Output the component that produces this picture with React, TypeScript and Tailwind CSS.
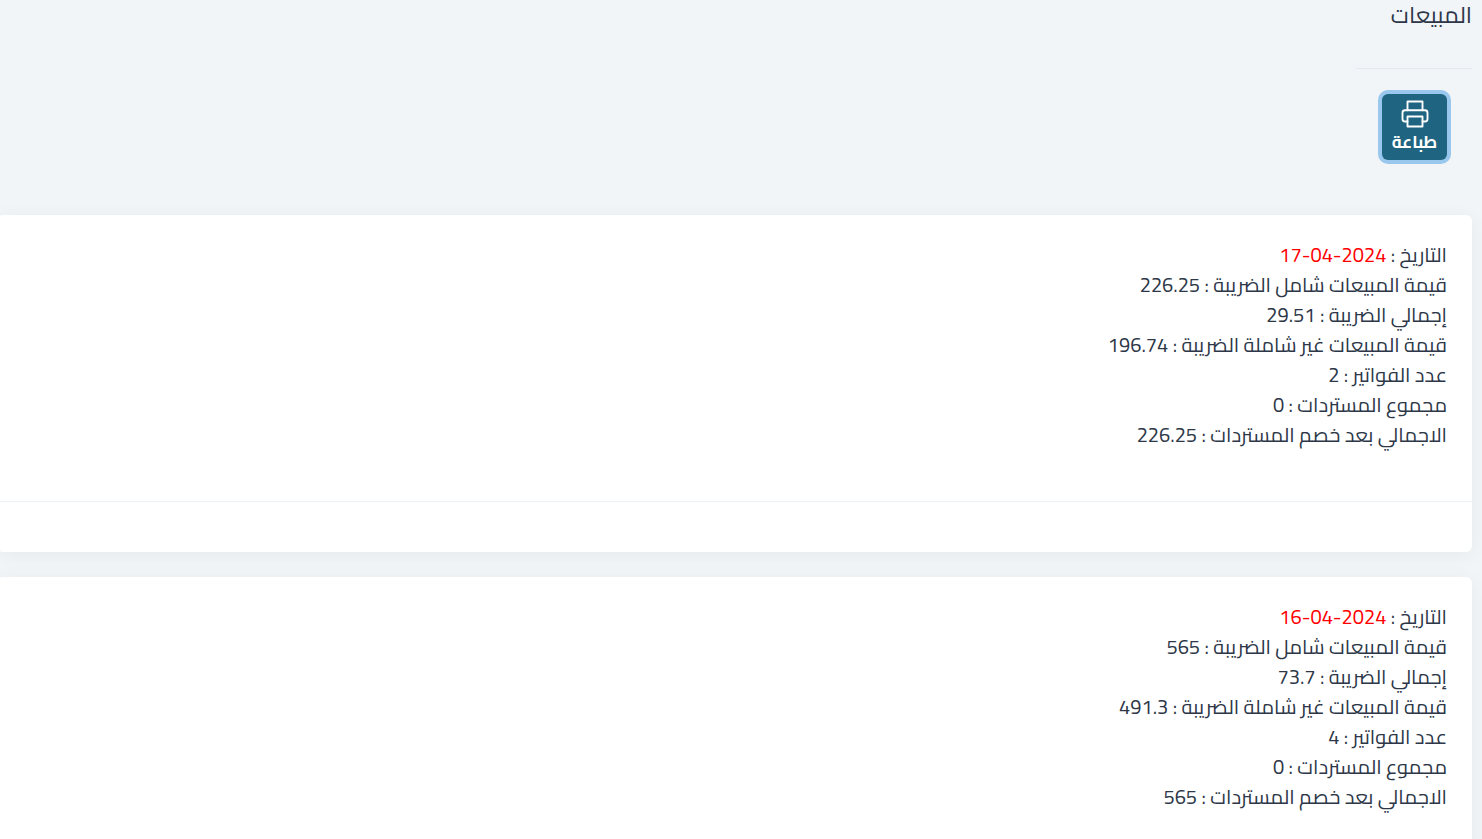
type Report = {
  date: string
  rows: { label: string; value: string }[]
}

const REPORTS: Report[] = [
  {
    date: '17-04-2024',
    rows: [
      { label: 'قيمة المبيعات شامل الضريبة', value: '226.25' },
      { label: 'إجمالي الضريبة', value: '29.51' },
      { label: 'قيمة المبيعات غير شاملة الضريبة', value: '196.74' },
      { label: 'عدد الفواتير', value: '2' },
      { label: 'مجموع المستردات', value: '0' },
      { label: 'الاجمالي بعد خصم المستردات', value: '226.25' },
    ],
  },
  {
    date: '16-04-2024',
    rows: [
      { label: 'قيمة المبيعات شامل الضريبة', value: '565' },
      { label: 'إجمالي الضريبة', value: '73.7' },
      { label: 'قيمة المبيعات غير شاملة الضريبة', value: '491.3' },
      { label: 'عدد الفواتير', value: '4' },
      { label: 'مجموع المستردات', value: '0' },
      { label: 'الاجمالي بعد خصم المستردات', value: '565' },
    ],
  },
]

function PrinterIcon() {
  return (
    <svg
      aria-hidden
      viewBox="0 0 24 24"
      className="size-[30px]"
      fill="none"
      stroke="currentColor"
      strokeWidth="1.5"
      strokeLinecap="round"
      strokeLinejoin="round"
    >
      <polyline points="6 9 6 2 18 2 18 9" />
      <path d="M6 18H4a2 2 0 0 1-2-2v-5a2 2 0 0 1 2-2h16a2 2 0 0 1 2 2v5a2 2 0 0 1-2 2h-2" />
      <rect x="6" y="14" width="12" height="8" />
    </svg>
  )
}

function ReportCard({ date, rows }: Report) {
  return (
    <section className="rounded-l-xs rounded-r-md bg-white shadow-[0_3px_20px_#0000000d]">
      <div className="border-b border-[#edf2f7] px-[25px] pt-[25px] pb-[51px] text-[20px] leading-[30px]">
        <p>
          التاريخ :{' '}
          <bdi dir="ltr" className="text-[#ff0000]">
            {date}
          </bdi>
        </p>
        {rows.map((r) => (
          <p key={r.label}>{`${r.label} : ${r.value}`}</p>
        ))}
      </div>
      <div className="h-[50px]" />
    </section>
  )
}

export default function App() {
  return (
    <div
      dir="rtl"
      className="h-screen overflow-x-hidden overflow-y-auto bg-[#f1f5f8] pr-[10px] font-['Cairo','Roboto','DejaVu_Sans',sans-serif] text-[#2d3748] [scrollbar-width:none]"
    >
      <header className="flex flex-col items-start">
        <h1 className="text-[23px] leading-[30px]">المبيعات</h1>
        <hr className="mt-[38px] w-[116px] border-[#e2e8f0]" />
        <button
          type="button"
          className="mt-[25px] mr-[25px] flex h-[66px] w-[65px] flex-col items-center rounded-md bg-[#1f6581] pt-[5px] text-white shadow-[0_0_0_4px_rgba(66,153,225,0.5)]"
        >
          <PrinterIcon />
          <span className="text-[17px] leading-[26px] font-bold">طباعة</span>
        </button>
      </header>

      <main className="mt-[55px] flex flex-col gap-[25px] pb-[25px]">
        {REPORTS.map((r) => (
          <ReportCard key={r.date} {...r} />
        ))}
      </main>
    </div>
  )
}
